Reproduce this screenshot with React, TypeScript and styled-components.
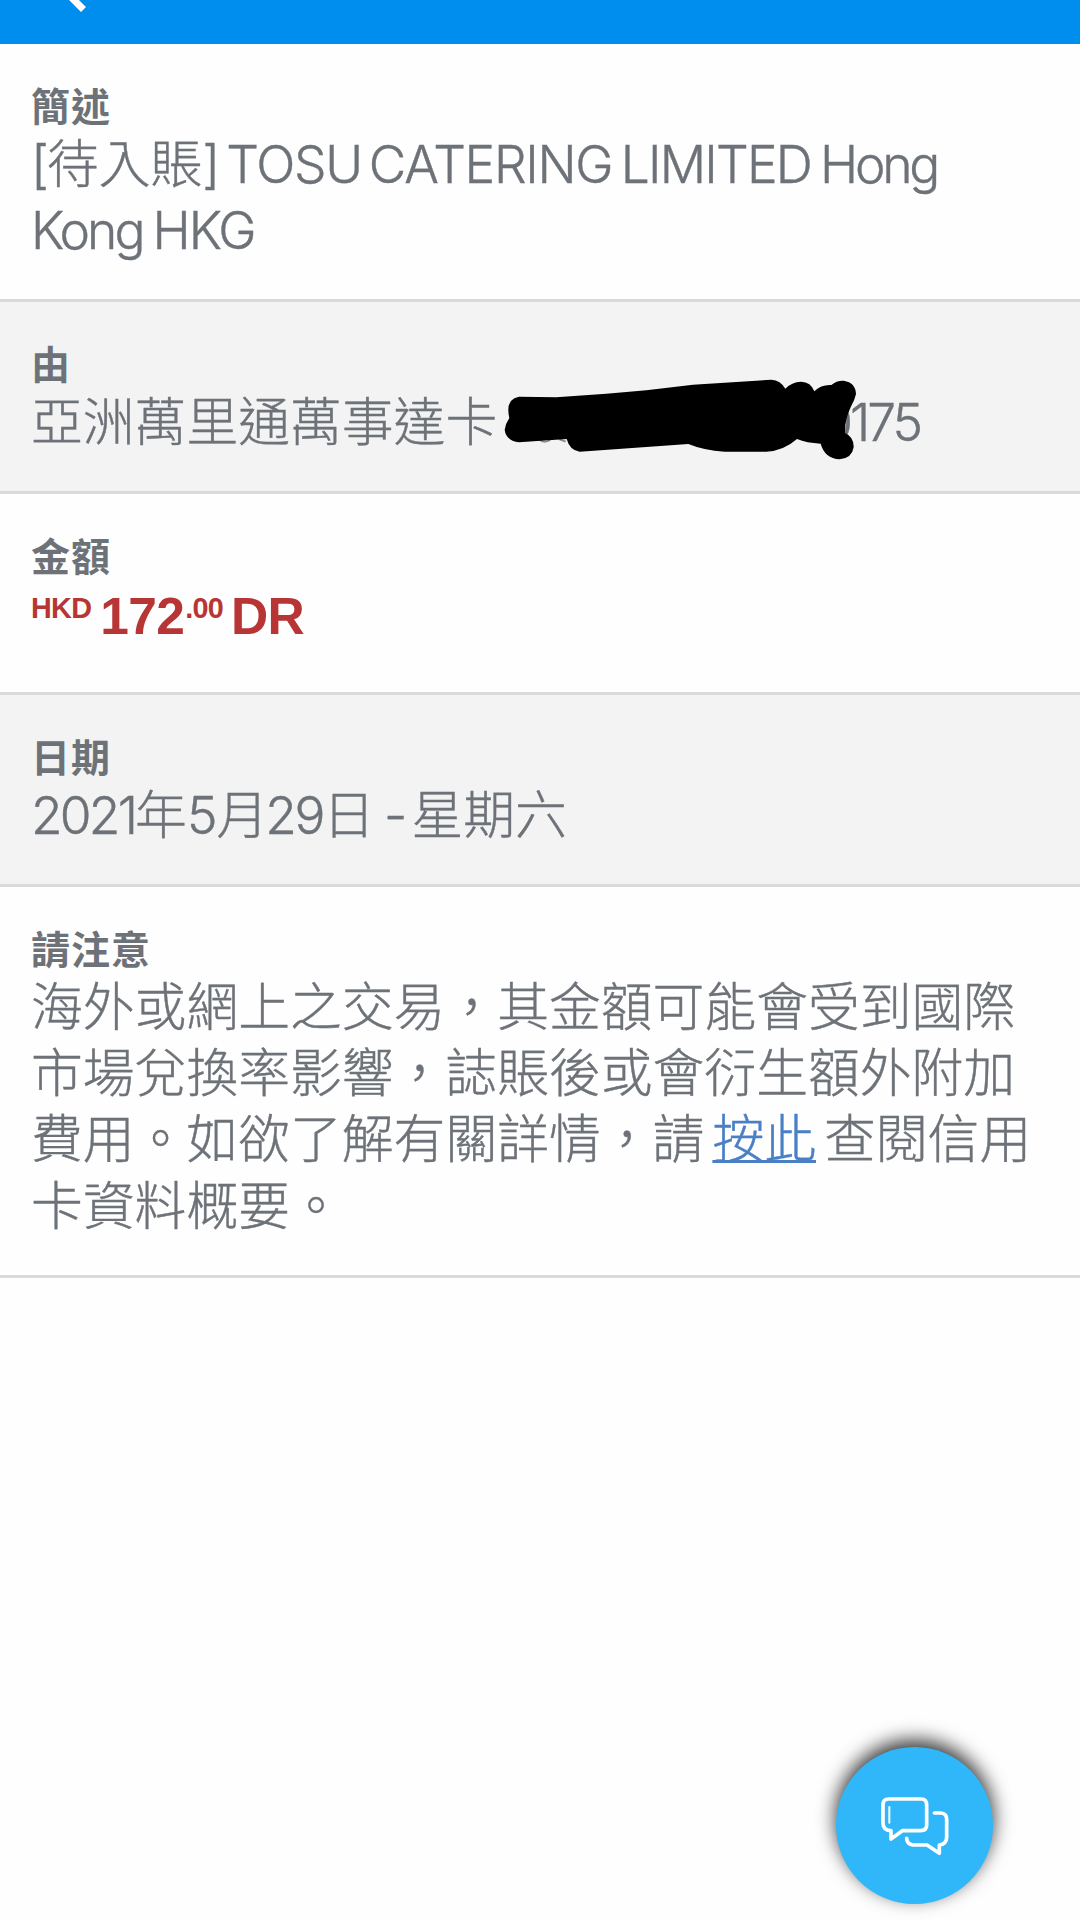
import React from "react";
import styled, { createGlobalStyle } from "styled-components";

const GlobalStyle = createGlobalStyle`
  * { box-sizing: border-box; }
  body { margin: 0; background: #fefefe; }
`;

const Screen = styled.main`
  position: relative;
  display: flex;
  flex-direction: column;
  width: 1080px;
  height: 1920px;
  overflow: hidden;
  background: #fefefe;
  color: #6d7278;
  font-family: Inter, "Noto Sans CJK TC", sans-serif;
`;

const TopBar = styled.header`
  flex: none;
  display: flex;
  height: 44px;
  padding-left: 66px;
  background: #008eee;
`;

const BackArrow = styled.svg`
  width: 24px;
  height: 14px;
`;

const Row = styled.section<{ $height: number; $shaded?: boolean }>`
  flex: none;
  display: flex;
  flex-direction: column;
  height: ${(p) => p.$height}px;
  padding: 36px 31px 0;
  border-bottom: 3px solid #d9dadb;
  background: ${(p) => (p.$shaded ? "#f3f3f3" : "#fefefe")};
`;

const Label = styled.h2`
  margin: 0;
  font-family: "Noto Sans CJK TC", sans-serif;
  font-size: 39px;
  font-weight: 700;
  line-height: 48px;
  letter-spacing: 1px;
`;

const Value = styled.div`
  position: relative;
  font-family: "Noto Sans CJK TC", sans-serif;
  font-size: 51.8px;
  font-weight: 300;
  line-height: 66.2px;
  white-space: nowrap;
  -webkit-text-stroke: 0.4px currentColor;
`;

const Latin = styled.span<{ $track?: number; $gap?: number }>`
  font-family: Inter, sans-serif;
  font-size: 51.5px;
  font-weight: 300;
  line-height: 1;
  letter-spacing: ${(p) => p.$track ?? -2}px;
  margin-left: ${(p) => p.$gap ?? 0}px;
`;

const Amount = styled.div`
  display: flex;
  align-items: baseline;
  color: #b83535;
  font-family: "Liberation Sans", Arial, sans-serif;
  font-size: 51.5px;
  font-weight: 700;
  line-height: 76px;
  letter-spacing: -0.7px;
`;

const Raised = styled.span<{ $left?: number; $right?: number }>`
  font-size: 28.8px;
  line-height: 1;
  transform: translateY(-16px);
  margin-left: ${(p) => p.$left ?? 0}px;
  margin-right: ${(p) => p.$right ?? 0}px;
`;

const Link = styled.a`
  color: #4a7fc6;
  text-decoration: underline;
  text-decoration-thickness: 3px;
  text-underline-offset: 2px;
  margin: 0 8px;
`;

const Redaction = styled.svg`
  position: absolute;
  left: 472px;
  top: -7px;
  width: 355px;
  height: 82px;
`;

const ChatButton = styled.button`
  position: absolute;
  left: 836px;
  top: 1747px;
  display: flex;
  align-items: center;
  justify-content: center;
  width: 157px;
  height: 157px;
  padding: 0;
  border: 0;
  border-radius: 50%;
  background: #2fb7fa;
  box-shadow: 0 -7px 19px rgba(0, 0, 0, 0.8);
`;

const ChatIcon = styled.svg`
  width: 70px;
  height: 62px;
`;

export default function App() {
  return (
    <Screen>
      <GlobalStyle />
      <TopBar>
        <BackArrow viewBox="0 0 24 14" fill="none" stroke="#fff" strokeWidth="7">
          <path d="M3 -5 L17.5 9.5" />
        </BackArrow>
      </TopBar>

      <Row $height={258}>
        <Label>簡述</Label>
        <Value>
          <Latin>[</Latin>待入賬<Latin>]</Latin>
          <Latin $gap={8} $track={-1.3}>TOSU</Latin>
          <Latin $track={-7.5}> </Latin>
          <Latin $track={-1.3}>CATERING</Latin>
          <Latin $track={-6}> </Latin>
          <Latin $track={-1.8}>LIMITED</Latin>
          <Latin $track={-5.5}> </Latin>
          <Latin $track={-3.3}>Hong</Latin>
          <br />
          <Latin $track={-2.9}>Kong</Latin>
          <Latin $track={-4.5}> </Latin>
          <Latin $track={-2}>HKG</Latin>
        </Value>
      </Row>

      <Row $height={192} $shaded>
        <Label>由</Label>
        <Value>
          亞洲萬里通萬事達卡
          <Latin $gap={324} $track={-3}>0175</Latin>
          <Redaction viewBox="70 85 1065 246">
            <path d="M180 268 q15 10 32 0 M238 265 l20 8" fill="none" stroke="#8b8f93" strokeWidth="6" />
            <path d="M118 138 L230 140 L380 129 L500 119 L640 102 L875 87 Q903 89 917 114 Q936 94 964 93 Q994 94 1004 122 Q1025 101 1055 103 Q1071 89 1092 90 Q1128 96 1129 130 Q1125 149 1113 170 Q1095 207 1096 247 Q1123 259 1122 290 Q1117 323 1080 326 Q1035 323 1023 279 Q981 277 952 265 Q911 301 860 303 L735 303 Q672 299 626 280 L300 303 Q270 299 261 265 L118 275 Q79 270 75 237 Q77 220 89 202 Q76 145 118 138Z" />
          </Redaction>
        </Value>
      </Row>

      <Row $height={201}>
        <Label>金額</Label>
        <Amount>
          <Raised $right={9}>HKD</Raised>172<Raised $left={1} $right={8}>.00</Raised>DR
        </Amount>
      </Row>

      <Row $height={192} $shaded>
        <Label>日期</Label>
        <Value>
          <Latin $track={-2.8}>2021</Latin>年<Latin $track={-1}>5</Latin>月
          <Latin $gap={-3} $track={-2.5}>29</Latin>日<Latin $track={-5.2}> - </Latin>星期六
        </Value>
      </Row>

      <Row $height={391}>
        <Label>請注意</Label>
        <Value>
          海外或網上之交易，其金額可能會受到國際
          <br />
          市場兌換率影響，誌賬後或會衍生額外附加
          <br />
          費用。如欲了解有關詳情，請<Link>按此</Link>查閱信用
          <br />
          卡資料概要。
        </Value>
      </Row>

      <ChatButton aria-label="Chat">
        <ChatIcon
          viewBox="240 255 210 186"
          fill="none"
          stroke="#fff"
          strokeWidth="11"
          strokeLinecap="round"
          strokeLinejoin="round"
        >
          <path d="M266 267 H364 Q380 267 380 285 V345 Q380 362 362 362 H307 L273 387 V362 Q249 361 249 338 V285 Q249 267 266 267Z" />
          <path d="M403 309 H422 Q440 310 440 328 V382 Q439 403 418 405 V430 L381 405 H338 Q320 402 320 385" />
          <path d="M268 291 V338" strokeWidth="6" />
        </ChatIcon>
      </ChatButton>
    </Screen>
  );
}
